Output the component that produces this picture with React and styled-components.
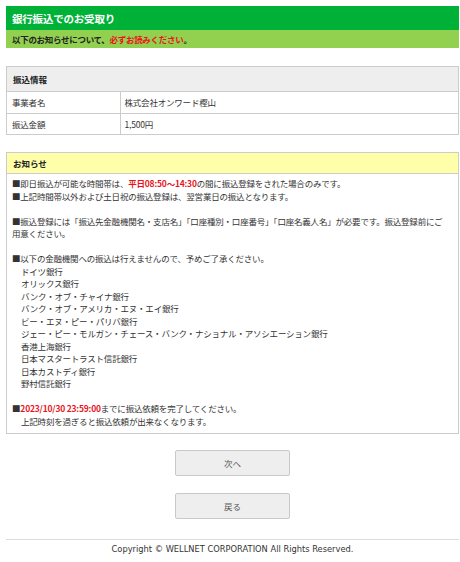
import React from "react"
import styled, { createGlobalStyle } from "styled-components"

const GlobalStyle = createGlobalStyle`
  *, *::before, *::after {
    box-sizing: border-box;
  }
  html, body {
    margin: 0;
    padding: 0;
    background: #fff;
  }
  body {
    font-family: "Noto Sans CJK JP", "Noto Sans", sans-serif;
    color: #333;
  }
`

const Page = styled.div`
  padding: 6px 1px 0 6px;
`

const TitleBar = styled.h1`
  margin: 0;
  height: 24px;
  display: flex;
  align-items: center;
  padding-left: 6px;
  background: #00b137;
  color: #fff;
  font-size: 10.5px;
  font-weight: 700;
  letter-spacing: -0.2px;
`

const Lead = styled.p`
  margin: 0;
  height: 18px;
  display: flex;
  align-items: center;
  padding-left: 6px;
  background: #92d050;
  color: #222;
  font-size: 8.5px;
  font-weight: 700;
  letter-spacing: -0.3px;
`

const Red = styled.span`
  color: #e8141c;
  font-weight: 700;
`

const Panel = styled.section`
  margin-top: ${(p) => p.$gap || 18}px;
  border: 1px solid #ccc;
`

const PanelHead = styled.div`
  height: ${(p) => p.$h || 25}px;
  display: flex;
  align-items: center;
  padding-left: 6px;
  background: ${(p) => p.$bg || "#eee"};
  border-bottom: 1px solid #ccc;
  font-size: 8.5px;
  font-weight: 700;
  color: #222;
`

const InfoTable = styled.table`
  width: 100%;
  table-layout: fixed;
  border-collapse: collapse;
  font-size: 8.5px;
  letter-spacing: -0.2px;
`

const Row = styled.tr`
  height: 21px;
  & + & td,
  & + & th {
    border-top: 1px solid #ccc;
  }
`

const Label = styled.th`
  width: 113px;
  padding: 0 5px;
  text-align: left;
  font-weight: 400;
  border-right: 1px solid #ccc;
  color: #333;
`

const Value = styled.td`
  padding: 0 4px;
  color: #333;
`

const NoticeBody = styled.div`
  padding: 3px 10px 6px 5px;
  font-size: 8.5px;
  line-height: 12.5px;
  letter-spacing: -0.2px;
  color: #333;
`

const Para = styled.p`
  margin: 0 0 12.5px;
  &:last-child {
    margin-bottom: 0;
  }
`

const Indent = styled.span`
  display: block;
  padding-left: 9px;
`

const Actions = styled.div`
  display: flex;
  flex-direction: column;
  align-items: center;
  gap: 17px;
  margin-top: 16px;
`

const Button = styled.button`
  width: 115px;
  height: 26px;
  border: 1px solid #c8c8c8;
  border-radius: 2px;
  background: #eee;
  color: #555;
  font-family: "Noto Sans CJK JP", sans-serif;
  font-size: 8.5px;
  cursor: pointer;
`

const Footer = styled.footer`
  margin-top: 20px;
  border-top: 1px solid #ddd;
  padding-top: 4px;
  text-align: center;
  font-family: "DejaVu Sans", sans-serif;
  font-size: 8.3px;
  color: #333;
`

const banks = [
  "ドイツ銀行",
  "オリックス銀行",
  "バンク・オブ・チャイナ銀行",
  "バンク・オブ・アメリカ・エヌ・エイ銀行",
  "ビー・エヌ・ピー・パリバ銀行",
  "ジェー・ピー・モルガン・チェース・バンク・ナショナル・アソシエーション銀行",
  "香港上海銀行",
  "日本マスタートラスト信託銀行",
  "日本カストディ銀行",
  "野村信託銀行",
]

export default function App() {
  return (
    <Page>
      <GlobalStyle />
      <TitleBar>銀行振込でのお受取り</TitleBar>
      <Lead>
        以下のお知らせについて、<Red>必ずお読みください</Red>。
      </Lead>

      <Panel>
        <PanelHead>振込情報</PanelHead>
        <InfoTable>
          <tbody>
            <Row>
              <Label>事業者名</Label>
              <Value>株式会社オンワード樫山</Value>
            </Row>
            <Row>
              <Label>振込金額</Label>
              <Value>1,500円</Value>
            </Row>
          </tbody>
        </InfoTable>
      </Panel>

      <Panel $gap={17}>
        <PanelHead $h={21} $bg="#ffffaa">お知らせ</PanelHead>
        <NoticeBody>
          <Para>
            ■即日振込が可能な時間帯は、<Red>平日08:50～14:30</Red>の間に振込登録をされた場合のみです。
            <br />
            ■上記時間帯以外および土日祝の振込登録は、翌営業日の振込となります。
          </Para>
          <Para>
            ■振込登録には「振込先金融機関名・支店名」「口座種別・口座番号」「口座名義人名」が必要です。振込登録前にご用意ください。
          </Para>
          <Para>
            ■以下の金融機関への振込は行えませんので、予めご了承ください。
            {banks.map((b) => (
              <Indent key={b}>{b}</Indent>
            ))}
          </Para>
          <Para>
            ■<Red>2023/10/30 23:59:00</Red>までに振込依頼を完了してください。
            <Indent>上記時刻を過ぎると振込依頼が出来なくなります。</Indent>
          </Para>
        </NoticeBody>
      </Panel>

      <Actions>
        <Button type="button">次へ</Button>
        <Button type="button">戻る</Button>
      </Actions>

      <Footer>Copyright © WELLNET CORPORATION All Rights Reserved.</Footer>
    </Page>
  )
}
